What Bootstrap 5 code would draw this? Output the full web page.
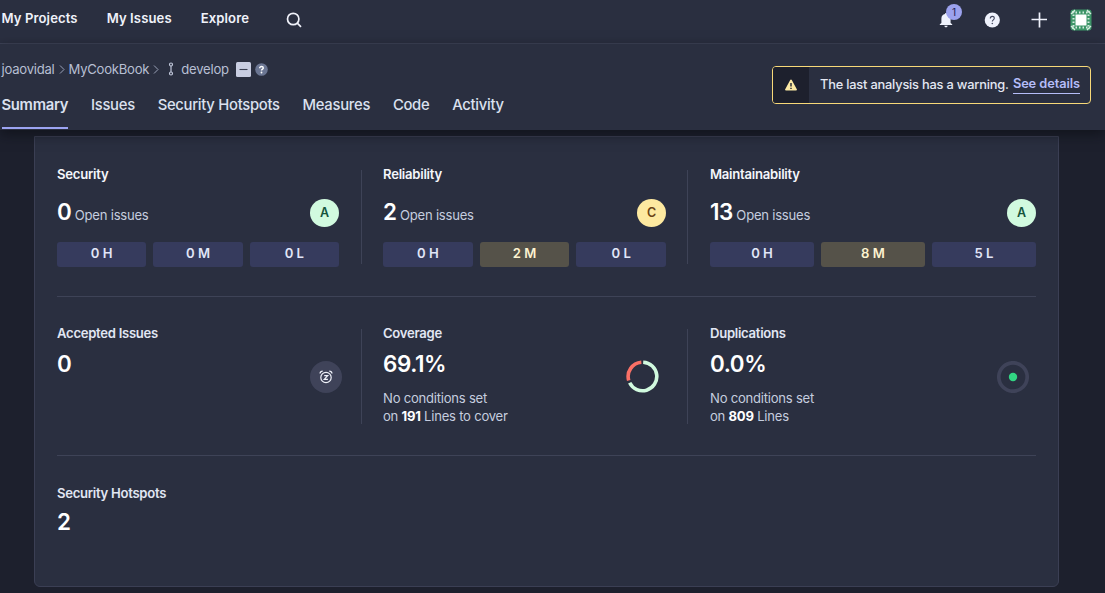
<!DOCTYPE html>
<html lang="en">
<head>
<meta charset="utf-8">
<meta name="viewport" content="width=device-width, initial-scale=1">
<title>MyCookBook - Summary</title>
<link rel="stylesheet" href="https://cdn.jsdelivr.net/npm/bootstrap@5.3.0/dist/css/bootstrap.min.css">
<style>
  body { font-family: Inter, "Liberation Sans", sans-serif; font-size: 13.1px; letter-spacing: -.24px; line-height: 18px; background: #1d202d; color: #c5cddf; height: 593px; overflow: hidden; }
  .topbar { height: 44px; background: #2a2f40; border-bottom: 1px solid #3e4357; padding: 0 13px 6px 1.5px; }
  .topbar .main-links { gap: 29px; letter-spacing: .1px; }
  .topbar a { color: #f0f2fa; font-weight: 600; text-decoration: none; margin-top: -1px; }
  .search-icon { margin: 3px 0 0 8px; }
  .top-actions { padding-top: 3px; }
  .bell { width: 14px; height: 16px; margin-right: 31px; }
  .bell-count { top: -8px; left: 7px; width: 16px; height: 16px; font-size: 10px; line-height: 16px; background: #9ca2ee; color: #1d2152; }
  .project-head { height: 86px; background: #2a2f40; padding: 0 14px 0 1.5px; box-shadow: 0 4px 12px rgba(10, 12, 18, .62); z-index: 2; }
  .crumbs { height: 18px; margin-top: 16px; color: #b7bfd3; }
  .crumbs span { margin-top: -1px; }
  .tabs { gap: 22.8px; margin-top: 11px; font-size: 14.8px; letter-spacing: -.28px; line-height: 32px; }
  .tabs a { color: #dbe1ef; text-decoration: none; height: 40px; font-weight: 450; }
  .tabs a.active { font-weight: 600; border-bottom: 2px solid #9ca4f2; }
  .warn-box { width: 319px; height: 38px; margin-top: 22px; border: 1px solid #f8d978; border-radius: 4px; overflow: hidden; color: #e3e7f2; font-weight: 500; font-size: 12.8px; white-space: nowrap; letter-spacing: -.19px; }
  .warn-icon { width: 36px; background: #1d202d; }
  .warn-text { padding: 0 10px 0 11px; }
  .warn-box a { color: #b5bdf8; font-weight: 600; text-decoration: none; border-bottom: 1px solid #b5bdf8; line-height: 18px; margin-top: -2px; letter-spacing: -.07px; }
  .board { width: 1025px; height: 451px; margin: 6px 0 0 34px; background: #2a2f40; border: 1px solid #3b3f54; border-radius: 0 0 6px 6px; padding: 0 22px; }
  .measures { display: grid; grid-template-columns: 304px 326px 1fr; }
  .measures + .measures { border-top: 1px solid #3e4357; }
  .measures.first { height: 159px; padding: 33px 0 32px; }
  .measures.first .cell { height: 94px; }
  .measures.second { height: 159px; padding: 32px 0; }
  .measures.second .cell { height: 95px; }
  .measures.third { padding-top: 28px; }
  .cell + .cell { padding-left: 21px; border-left: 1px solid #3e4357; }
  .cell { padding-right: 22px; }
  .cell:nth-child(2) { padding-right: 21px; }
  .cell + .cell:nth-child(3) { padding-left: 22px; padding-right: 0; }
  .label-strong { color: #f4f6fb; font-weight: 600; line-height: 18px; }
  .label-soft { color: #e1e6f3; font-weight: 600; line-height: 18px; letter-spacing: -.28px; }
  .first .label-strong { margin-top: -5px; }
  .second .label-soft { margin-top: -5px; }
  .figure-value { color: #fff; font-size: 22.4px; line-height: 30px; font-weight: 600; letter-spacing: -.4px; }
  .rating { width: 29px; height: 28px; font-weight: 600; font-size: 12.5px; }
  .rating-a { background: #d1fadf; color: #14533c; }
  .rating-c { background: #fde9a0; color: #6b4416; }
  .open-row { height: 30px; margin: 15px 0 14px; }
  .open-row > div { margin-top: -2px; }
  .pills { gap: 7px; }
  .pill { flex: 1 1 0; height: 25px; line-height: 23px; border-radius: 3px; background: #363b5d; color: #e1e6f8; font-weight: 600; text-align: center; letter-spacing: 0; }
  .pill.medium { background: #555249; color: #fdf3d0; }
  .stacked { margin-top: 7px; }
  .third .stacked { margin-top: 5px; }
  .note { margin-top: 10px; line-height: 18px; }
  .note b { color: #fff; font-weight: 700; }
  .snooze { width: 32px; height: 32px; background: #3f4359; }
</style>
</head>
<body>
<header class="topbar d-flex align-items-center justify-content-between">
  <nav class="main-links d-flex align-items-center">
    <a href="#">My Projects</a><a href="#">My Issues</a><a href="#">Explore</a>
    <svg class="search-icon" width="16" height="16" viewBox="0 0 16 16" fill="none" stroke="#f0f2fa" stroke-width="1.7"><circle cx="7.2" cy="7" r="5.7"/><path d="M11.3 11.1 15 14.8"/></svg>
  </nav>
  <div class="top-actions d-flex align-items-center">
    <div class="bell position-relative">
      <svg class="d-block" width="14" height="16" viewBox="0 0 14 16" fill="#eff2fc"><path d="M7 1c.6 0 1 .4 1 1 2.200.4 3.600 2.200 3.600 4.400V11l1.600 1.300V13H.8v-.7L2.400 11V6.400C2.400 4.200 3.800 2.400 6 2c0-.6.4-1 1-1zM5.300 13.800h3.400c0 .9-.7 1.500-1.700 1.500s-1.700-.6-1.700-1.500z"/></svg>
      <span class="bell-count position-absolute rounded-circle text-center">1</span>
    </div>
    <svg width="16" height="16" viewBox="0 0 16 16" fill="none"><circle cx="8.300" cy="8" r="7.6" fill="#eff2fc"/><path d="M6.300 6.500c0-1.300.9-2.100 2-2.100s2 .8 2 1.900c0 1.500-2 1.600-2 3.200" stroke="#454a60" stroke-width="1.100"/><circle cx="8.300" cy="11.500" r=".8" fill="#454a60"/></svg>
    <svg style="margin-left:31px" width="16" height="16" viewBox="0 0 16 16" stroke="#eff2fc" stroke-width="1.700"><path d="M8.500 .5v15M.5 7.500h15.500"/></svg>
    <svg style="margin-left:23px" width="22" height="22" viewBox="0 0 22 22"><rect x=".5" y=".5" width="21" height="21" rx="3" fill="#3d9568"/><g stroke="#d5ecdf" fill="none"><path d="M2 3.500h18M2 18.500h18M3.500 2v18M18.500 2v18" stroke-width="2" stroke-dasharray="1.500 2"/><path d="M1 5l4-4M17 1l4 4M1 17l4 4M17 21l4-4" stroke-width="1.200"/></g><rect x="5.500" y="5.500" width="11" height="11" fill="#fff"/></svg>
  </div>
</header>

<section class="project-head position-relative d-flex justify-content-between align-items-start">
  <div>
    <div class="crumbs d-flex align-items-center">
      <span>joaovidal</span>
      <svg width="14" height="12" viewBox="0 0 14 12" fill="none" stroke="#9aa2b8"><path d="M5 2.500l4 4L5 10.500"/></svg>
      <span>MyCookBook</span>
      <svg width="14" height="12" viewBox="0 0 14 12" fill="none" stroke="#9aa2b8"><path d="M5 2.500l4 4L5 10.500"/></svg>
      <svg style="margin:0 7px 0 5px" width="6" height="14" viewBox="0 0 6 14" fill="none" stroke="#c0c7da" stroke-width="1.200"><circle cx="3" cy="2.500" r="1.500"/><circle cx="3" cy="11.500" r="1.500"/><path d="M3 4v6"/></svg>
      <span>develop</span>
      <svg style="margin-left:7px" width="15" height="15" viewBox="0 0 15 15"><rect width="15" height="15" rx="1.500" fill="#c9cee2"/><path d="M3.500 7.500h8" stroke="#3a3f53" stroke-width="1.100"/></svg>
      <svg style="margin-left:4px" width="13" height="13" viewBox="0 0 13 13" fill="none"><circle cx="6.500" cy="6.500" r="6.300" fill="#6b7693"/><path d="M4.700 5.200c0-1.100.8-1.700 1.800-1.700s1.800.6 1.800 1.500c0 1.200-1.800 1.200-1.800 2.600" stroke="#fff" stroke-width="1.400"/><circle cx="6.500" cy="9.500" r=".9" fill="#fff"/></svg>
    </div>
    <nav class="tabs d-flex">
      <a class="active" href="#">Summary</a><a href="#">Issues</a><a href="#">Security Hotspots</a><a href="#">Measures</a><a href="#">Code</a><a href="#">Activity</a>
    </nav>
  </div>
  <div class="warn-box d-flex">
    <div class="warn-icon d-flex align-items-center justify-content-center">
      <svg width="12" height="12" viewBox="0 0 12 12"><path d="M6 .4c.4 0 .6.2.8.5l5 9.300c.4.700 0 1.300-.8 1.300H1c-.8 0-1.200-.6-.8-1.300l5-9.300c.2-.3.4-.5.8-.5z" fill="#fce9a4"/><path d="M6 4v3.600M6 8.700v1.300" stroke="#1d202d" stroke-width="1.400"/></svg>
    </div>
    <div class="warn-text flex-fill d-flex align-items-center justify-content-between"><span>The last analysis has a warning.</span><a href="#">See details</a></div>
  </div>
</section>

<main class="board">
  <div class="measures first">
    <div class="cell">
      <div class="label-strong">Security</div>
      <div class="open-row d-flex align-items-center justify-content-between"><div><span class="figure-value">0</span> Open issues</div><span class="rating rating-a rounded-circle d-flex align-items-center justify-content-center">A</span></div>
      <div class="pills d-flex"><span class="pill">0 H</span><span class="pill">0 M</span><span class="pill">0 L</span></div>
    </div>
    <div class="cell">
      <div class="label-strong">Reliability</div>
      <div class="open-row d-flex align-items-center justify-content-between"><div><span class="figure-value">2</span> Open issues</div><span class="rating rating-c rounded-circle d-flex align-items-center justify-content-center">C</span></div>
      <div class="pills d-flex"><span class="pill">0 H</span><span class="pill medium">2 M</span><span class="pill">0 L</span></div>
    </div>
    <div class="cell">
      <div class="label-strong">Maintainability</div>
      <div class="open-row d-flex align-items-center justify-content-between"><div><span class="figure-value">13</span> Open issues</div><span class="rating rating-a rounded-circle d-flex align-items-center justify-content-center">A</span></div>
      <div class="pills d-flex"><span class="pill">0 H</span><span class="pill medium">8 M</span><span class="pill">5 L</span></div>
    </div>
  </div>
  <div class="measures second">
    <div class="cell d-flex justify-content-between align-items-center" style="padding-right:19px">
      <div class="align-self-start"><div class="label-soft">Accepted Issues</div><div class="figure-value stacked">0</div></div>
      <span class="snooze rounded-circle d-flex align-items-center justify-content-center">
        <svg width="14" height="14" viewBox="0 0 14 14" fill="none" stroke="#f0f2fa" stroke-width="1.200"><circle cx="7" cy="7.500" r="5.200"/><path d="M1 3.500C1.200 2 2.200 1.200 3.700 1.200M13 3.500c-.2-1.500-1.200-2.300-2.700-2.300"/><path d="M5.200 5.700h3.500L5.300 9.300h3.600"/></svg>
      </span>
    </div>
    <div class="cell d-flex justify-content-between align-items-center" style="padding-right:28px">
      <div class="align-self-start"><div class="label-soft">Coverage</div><div class="figure-value stacked">69.1%</div><div class="note">No conditions set<br>on <b>191</b> Lines to cover</div></div>
      <svg width="33" height="33" viewBox="0 0 34 34" fill="none" stroke-width="3.700"><path d="M17.700 2.320A14.700 14.700 0 1 1 3.800 23.400" stroke="#d1fadf"/><path d="M2.800 21.100A14.700 14.700 0 0 1 15.800 2.350" stroke="#f97066"/></svg>
    </div>
    <div class="cell d-flex justify-content-between align-items-center" style="padding-right:7px">
      <div class="align-self-start"><div class="label-soft">Duplications</div><div class="figure-value stacked">0.0%</div><div class="note">No conditions set<br>on <b>809</b> Lines</div></div>
      <svg width="32" height="32" viewBox="0 0 32 32"><circle cx="16" cy="16" r="14.200" fill="none" stroke="#3f4359" stroke-width="3.700"/><circle cx="16" cy="16" r="4.200" fill="#32d583"/></svg>
    </div>
  </div>
  <div class="measures third">
    <div class="cell"><div class="label-soft">Security Hotspots</div><div class="figure-value stacked">2</div></div>
  </div>
</main>
<script src="https://cdn.jsdelivr.net/npm/bootstrap@5.3.0/dist/js/bootstrap.bundle.min.js"></script>
</body>
</html>
